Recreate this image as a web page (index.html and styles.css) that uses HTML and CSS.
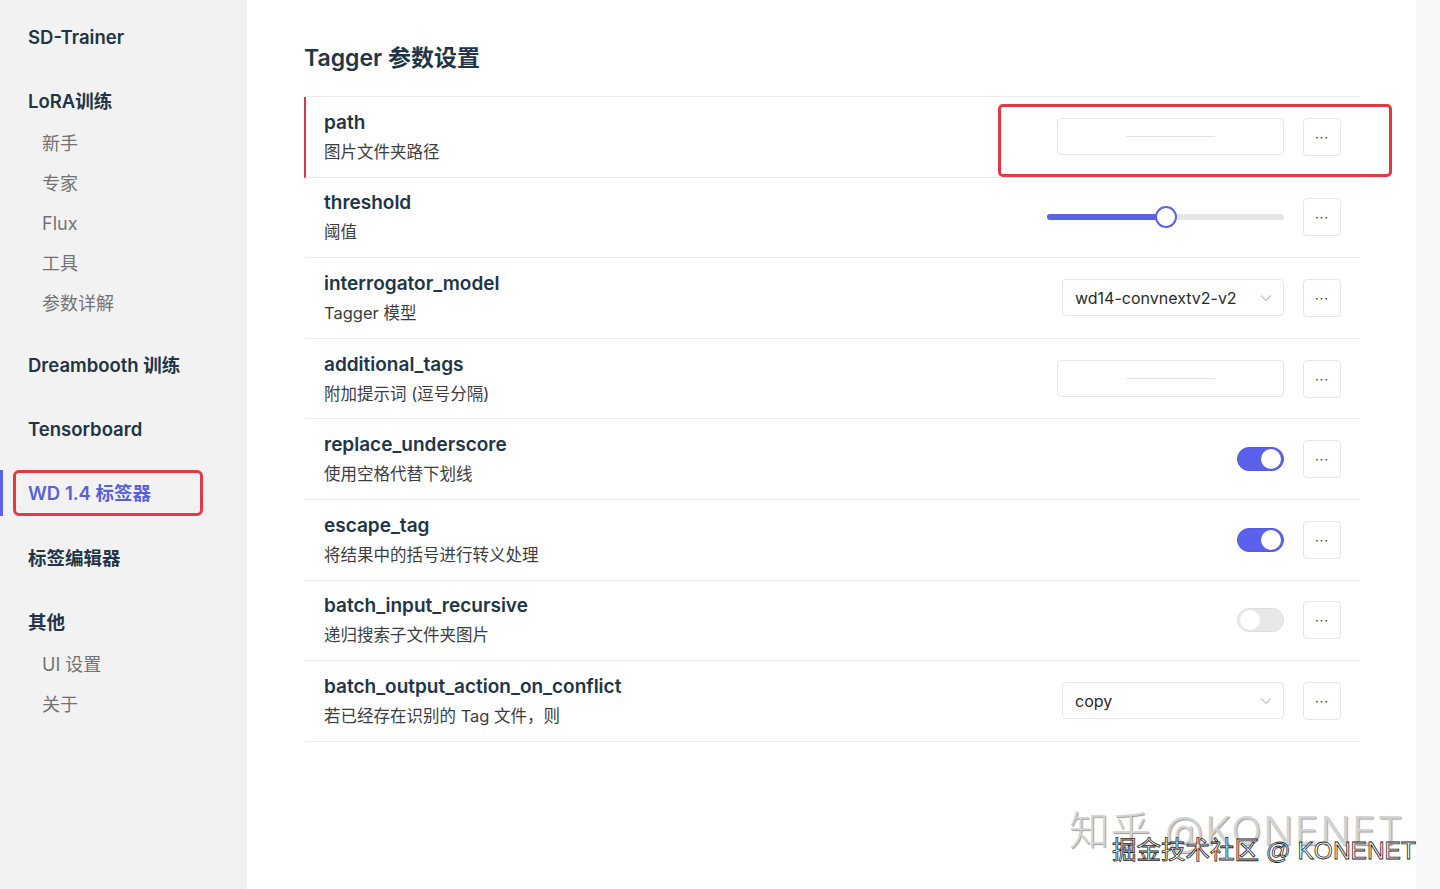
FILE: index.html
```html
<!DOCTYPE html>
<html lang="zh">
<head>
	<meta charset="utf-8">
	<meta name="viewport" content="width=device-width, initial-scale=1">
	<title>SD-Trainer - Tagger</title>
	<link rel="stylesheet" href="styles.css">
</head>
<body>

	<div class="layout">
		<aside class="sidebar">
			<div class="brand">SD-Trainer</div>

			<div class="group">
				<div class="group-title">LoRA训练</div>
				<div class="sub">
					<div class="sub-item">新手</div>
					<div class="sub-item">专家</div>
					<div class="sub-item">Flux</div>
					<div class="sub-item">工具</div>
					<div class="sub-item">参数详解</div>
				</div>
			</div>

			<div class="group">
				<div class="group-title">Dreambooth 训练</div>
			</div>
			<div class="group">
				<div class="group-title">Tensorboard</div>
			</div>
			<div class="group active">
				<div class="group-title"><span class="mark">WD 1.4 标签器</span></div>
			</div>
			<div class="group">
				<div class="group-title">标签编辑器</div>
			</div>

			<div class="group">
				<div class="group-title">其他</div>
				<div class="sub">
					<div class="sub-item">UI 设置</div>
					<div class="sub-item">关于</div>
				</div>
			</div>
		</aside>

		<main class="main">
			<h1 class="page-title">Tagger 参数设置</h1>

			<div class="params">
				<!-- path: обязательное поле, красная полоса слева -->
				<div class="param required">
					<div class="info">
						<div class="name">path</div>
						<div class="desc">图片文件夹路径</div>
					</div>
					<div class="control">
						<div class="text-input"><span class="ph"></span></div>
						<div class="more">···</div>
					</div>
					<div class="note-box"></div>
				</div>

				<div class="param">
					<div class="info">
						<div class="name">threshold</div>
						<div class="desc">阈值</div>
					</div>
					<div class="control">
						<div class="slider">
							<div class="slider-fill" style="width: 50%"></div>
							<div class="slider-thumb" style="left: 50%"></div>
						</div>
						<div class="more">···</div>
					</div>
				</div>

				<div class="param">
					<div class="info">
						<div class="name">interrogator_model</div>
						<div class="desc">Tagger 模型</div>
					</div>
					<div class="control">
						<div class="select">
							<span>wd14-convnextv2-v2</span>
							<svg class="chev" width="12" height="8" viewBox="0 0 12 8"><path d="M1 1.5 L6 6.5 L11 1.5" fill="none" stroke="#c4c4c4" stroke-width="1.1"/></svg>
						</div>
						<div class="more">···</div>
					</div>
				</div>

				<div class="param">
					<div class="info">
						<div class="name">additional_tags</div>
						<div class="desc">附加提示词 (逗号分隔)</div>
					</div>
					<div class="control">
						<div class="text-input"><span class="ph"></span></div>
						<div class="more">···</div>
					</div>
				</div>

				<div class="param">
					<div class="info">
						<div class="name">replace_underscore</div>
						<div class="desc">使用空格代替下划线</div>
					</div>
					<div class="control">
						<div class="switch on"><span class="knob"></span></div>
						<div class="more">···</div>
					</div>
				</div>

				<div class="param">
					<div class="info">
						<div class="name">escape_tag</div>
						<div class="desc">将结果中的括号进行转义处理</div>
					</div>
					<div class="control">
						<div class="switch on"><span class="knob"></span></div>
						<div class="more">···</div>
					</div>
				</div>

				<div class="param">
					<div class="info">
						<div class="name">batch_input_recursive</div>
						<div class="desc">递归搜索子文件夹图片</div>
					</div>
					<div class="control">
						<div class="switch"><span class="knob"></span></div>
						<div class="more">···</div>
					</div>
				</div>

				<div class="param">
					<div class="info">
						<div class="name">batch_output_action_on_conflict</div>
						<div class="desc">若已经存在识别的 Tag 文件，则</div>
					</div>
					<div class="control">
						<div class="select">
							<span>copy</span>
							<svg class="chev" width="12" height="8" viewBox="0 0 12 8"><path d="M1 1.5 L6 6.5 L11 1.5" fill="none" stroke="#c4c4c4" stroke-width="1.1"/></svg>
						</div>
						<div class="more">···</div>
					</div>
				</div>
			</div>

			<div class="watermark">
				<div class="wm-back">知乎 @KONENET</div>
				<div class="wm-front">掘金技术社区 @ KONENET</div>
			</div>
		</main>
	</div>

</body>
</html>
```

FILE: styles.css
```css
body {
	margin: 0;
	background: #f8f8f8;
	font-family: "Inter", "Noto Sans CJK SC", sans-serif;
	color: #213547;
}

.layout {
	display: flex;
	width: 1416px;
	min-height: 889px;
}

/* sidebar */
.sidebar {
	width: 247px;
	flex-shrink: 0;
	background: #f2f2f2;
	border-right: 1px solid #efefef;
	box-sizing: border-box;
	padding: 17px 0 0 28px;
}

.brand {
	font-size: 18.5px;
	font-weight: 600;
	line-height: 40px;
	margin-bottom: 24px;
}

.group {
	margin-bottom: 24px;
}

.group-title {
	font-size: 18.5px;
	font-weight: 600;
	line-height: 40px;
}

.sub {
	padding-top: 3px;
	margin-bottom: -3px;
}

.sub-item {
	font-size: 18px;
	line-height: 40px;
	padding-left: 14px;
	color: #737373;
}

.group.active {
	margin-left: -28px;
	border-left: 3px solid #5d63e6;
	padding-left: 10px;
	margin-top: -3px;
	margin-bottom: 22px;
}

.group.active .mark {
	display: block;
	width: 172px;
	line-height: 40px;
	border: 3px solid #e23a45;
	border-radius: 6px;
	padding-left: 12px;
	color: #5a60d8;
}

/* main */
.main {
	flex: 1;
	background: #fff;
	position: relative;
	padding: 42px 56px 0 57px;
}

.page-title {
	margin: 0 0 22px;
	font-size: 23px;
	line-height: 32px;
	font-weight: 600;
}

.params {
	border-top: 1px solid #ebebeb;
}

.param {
	position: relative;
	display: flex;
	align-items: center;
	justify-content: space-between;
	padding: 10.8px 19px 10.8px 18px;
	border-bottom: 1px solid #ebebeb;
	border-left: 2px solid transparent;
}

.param.required {
	border-left-color: #d9364e;
}

.name {
	font-size: 19px;
	font-weight: 600;
	line-height: 30px;
}

.desc {
	font-size: 16.5px;
	line-height: 28px;
	color: #3c3c43;
}

.control {
	display: flex;
	align-items: center;
	gap: 19px;
}

.more {
	width: 38px;
	height: 38px;
	box-sizing: border-box;
	border: 1px solid #e6e6e6;
	border-radius: 4px;
	display: flex;
	align-items: center;
	justify-content: center;
	font-size: 13px;
	color: #333;
	letter-spacing: 1px;
}

.text-input {
	width: 227px;
	height: 37px;
	box-sizing: border-box;
	border: 1px solid #e6e6e6;
	border-radius: 4px;
	display: flex;
	align-items: center;
	justify-content: center;
}

.ph {
	display: block;
	width: 89px;
	height: 1px;
	background: #e2e2e2;
}

.select {
	width: 222px;
	height: 37px;
	box-sizing: border-box;
	border: 1px solid #e6e6e6;
	border-radius: 4px;
	display: flex;
	align-items: center;
	justify-content: space-between;
	padding: 0 11px 0 12px;
	font-size: 16px;
	color: #2a2a2a;
}

.slider {
	position: relative;
	width: 237px;
	height: 6px;
	border-radius: 3px;
	background: #e6e6e6;
}

.slider-fill {
	height: 6px;
	border-radius: 3px;
	background: #5d63e6;
}

.slider-thumb {
	position: absolute;
	top: 50%;
	width: 22px;
	height: 22px;
	box-sizing: border-box;
	border: 2px solid #5d63e0;
	border-radius: 50%;
	background: #fff;
	transform: translate(-50%, -50%);
}

.switch {
	width: 47px;
	height: 24px;
	box-sizing: border-box;
	border-radius: 12px;
	background: #e8e8e8;
	border: 1px solid #dedede;
	display: flex;
	align-items: center;
	padding: 0 2px;
}

.switch .knob {
	width: 20px;
	height: 20px;
	border-radius: 50%;
	background: #fff;
}

.switch.on {
	background: #5b61ec;
	border-color: #5359d8;
	justify-content: flex-end;
}

/* annotation frame round the path control */
.note-box {
	position: absolute;
	top: 7px;
	bottom: 0;
	left: 692px;
	right: -32px;
	border: 3px solid #e23a45;
	border-radius: 5px;
}

/* watermark */
.watermark {
	position: absolute;
	left: 822px;
	top: 807px;
}

.wm-back {
	font-size: 40px;
	line-height: 48px;
	font-weight: 300;
	color: #d4d4d4;
	letter-spacing: 1.5px;
	white-space: nowrap;
	text-shadow: 1px 1px 1px #9a9a9a;
}

.wm-front {
	margin: -19px 0 0 43px;
	font-size: 24.5px;
	line-height: 30px;
	color: #fff;
	font-family: "Liberation Sans", "Noto Sans CJK SC", sans-serif;
	-webkit-text-stroke: 0.8px #222;
	white-space: nowrap;
}
```
